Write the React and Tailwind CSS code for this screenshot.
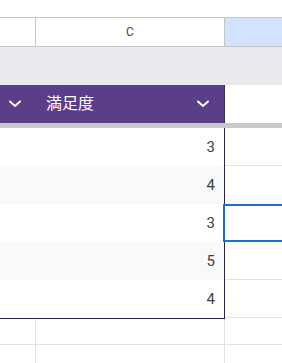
import React from 'react';

const rows = [3, 4, 3, 5, 4];

const Chevron = ({ className }) => (
  <svg viewBox="0 0 14 8" className={className} fill="none" stroke="white" strokeWidth="2" strokeLinecap="round" strokeLinejoin="round">
    <path d="M2 1.5 L7 6 L12 1.5" />
  </svg>
);

export default function App() {
  return (
    <div className="w-[282px] h-[363px] overflow-hidden bg-white font-['Roboto','Noto_Sans_CJK_JP',sans-serif]">
      <div className="h-[17px]" />

      {/* column headers */}
      <div className="flex h-[30px] border-y border-[#c4c7c5]">
        <div className="w-[36px] shrink-0 border-r border-[#c4c7c5] bg-white" />
        <div className="w-[189px] shrink-0 border-r border-[#c4c7c5] bg-white flex items-center justify-center text-[12px] text-[#444746]">
          C
        </div>
        <div className="flex-1 bg-[#d3e3fd]" />
      </div>

      {/* frozen band */}
      <div className="h-[38px] bg-[#e8eaed]" />

      {/* table header */}
      <div className="flex h-[38px]">
        <div className="w-[225px] shrink-0 bg-[#5b3e88] border-r border-[#3b2a5c] flex items-center text-white">
          <Chevron className="w-[14px] h-[8px] ml-[8px]" />
          <span className="ml-[24px] text-[16px] leading-none">満足度</span>
          <Chevron className="w-[14px] h-[8px] ml-auto mr-[14px]" />
        </div>
        <div className="flex-1 bg-white" />
      </div>
      <div className="h-[5px] bg-[#c9c9c9]" />

      {/* rows */}
      <div className="flex">
        <div className="w-[225px] shrink-0 border-r border-b border-[#2e2352]">
          {rows.map((n, i) => (
            <div
              key={i}
              className={`h-[38px] flex items-center justify-end pr-[9px] text-[15px] text-[#3c4043] ${i % 2 === 1 ? 'bg-[#f8f9fa]' : 'bg-white'}`}
            >
              {n}
            </div>
          ))}
        </div>
        <div className="flex-1 flex flex-col min-w-0">
          <div className="h-[38px] border-b border-[#e1e1e1]" />
          <div className="h-[38px] border-b border-transparent" />
          <div className="h-[38px] -ml-[2px] -mr-[10px] border-2 border-[#1a6fd1]" />
          <div className="h-[38px] border-b border-[#e1e1e1]" />
          <div className="h-[38px] border-b border-[#e1e1e1]" />
        </div>
      </div>

      {/* below table */}
      <div className="flex h-[26px] border-b border-[#e1e1e1]">
        <div className="w-[36px] shrink-0 border-r border-[#e1e1e1]" />
        <div className="w-[189px] shrink-0 border-r border-[#e1e1e1]" />
        <div className="flex-1" />
      </div>
      <div className="flex h-[40px]">
        <div className="w-[36px] shrink-0 border-r border-[#e1e1e1]" />
        <div className="w-[189px] shrink-0 border-r border-[#e1e1e1]" />
        <div className="flex-1" />
      </div>
    </div>
  );
}
